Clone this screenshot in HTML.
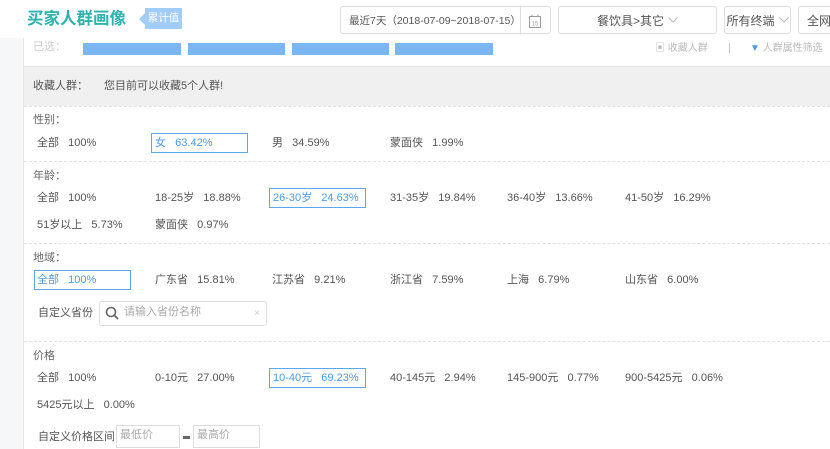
<!DOCTYPE html><html><head><meta charset="utf-8"><style>
*{margin:0;padding:0;box-sizing:border-box}
body{width:830px;height:449px;overflow:hidden;background:#fff;font-family:"Liberation Sans","Noto Sans CJK SC",sans-serif;font-size:11px;color:#555;position:relative}
.a{position:absolute;white-space:nowrap;line-height:13px}
.box{position:absolute;border:1px solid #ddd;border-radius:3px;background:#fff;font-size:12px;color:#555;display:flex;align-items:center;justify-content:center}
.sel{position:absolute;border:1px solid #5aa8ef;}
.blue{color:#4a9be8}
.dash{position:absolute;left:24px;right:0;border-top:1px dashed #e2e2e2}
.lab{color:#666}
.chev{margin-left:4px}
</style></head><body>
<div class="a" style="left:0;top:38px;width:23px;height:411px;background:#f6f7f9"></div>
<div class="a" style="left:23px;top:38px;width:1px;height:411px;background:#e6e6e6"></div>
<div class="a" style="left:27px;top:9px;font-size:16.5px;line-height:20px;font-weight:bold;color:#2cb3ae">买家人群画像</div>
<div class="a" style="left:133px;top:13px;width:0;height:0;border:6px solid transparent;border-right-color:#a3cdf9"></div>
<div class="a" style="left:145px;top:8px;width:37px;height:21px;background:#a3cdf9;color:#fff;font-size:10.5px;line-height:21px;text-align:center">累计值</div>
<div class="box" style="left:340px;top:6px;width:211px;height:28px;justify-content:flex-start;padding-left:8px;font-size:10.5px">最近7天（2018-07-09~2018-07-15）</div>
<div class="a" style="left:520px;top:7px;width:1px;height:26px;background:#ddd"></div>
<svg class="a" style="left:529px;top:14px" width="12" height="14" viewBox="0 0 12 14"><rect x="0.5" y="2.5" width="11" height="11" fill="none" stroke="#999"/><line x1="3" y1="0.5" x2="3" y2="3" stroke="#999"/><line x1="9" y1="0.5" x2="9" y2="3" stroke="#999"/><text x="6" y="11.5" font-size="6" text-anchor="middle" fill="#999">15</text></svg>
<div class="box" style="left:558px;top:6px;width:159px;height:28px">餐饮具&gt;其它<svg class="chev" width="10" height="6"><path d="M0.5 0.5L5 5L9.5 0.5" fill="none" stroke="#bbb"/></svg></div>
<div class="box" style="left:724px;top:6px;width:67px;height:28px">所有终端<svg class="chev" width="10" height="6"><path d="M0.5 0.5L5 5L9.5 0.5" fill="none" stroke="#bbb"/></svg></div>
<div class="box" style="left:798px;top:6px;width:40px;height:28px;justify-content:flex-start;padding-left:8px">全网</div>
<div class="a" style="left:33px;top:41px;color:#ccc">已选：</div>
<div class="a" style="left:83px;top:43px;width:98px;height:12px;background:#7cb6f2"></div>
<div class="a" style="left:188px;top:43px;width:97px;height:12px;background:#7cb6f2"></div>
<div class="a" style="left:292px;top:43px;width:97px;height:12px;background:#7cb6f2"></div>
<div class="a" style="left:395px;top:43px;width:98px;height:12px;background:#7cb6f2"></div>
<div class="a" style="left:655px;top:42px;color:#bbb;font-size:10px">▣ 收藏人群</div>
<div class="a" style="left:728px;top:42px;color:#bbb">|</div>
<div class="a" style="left:750px;top:42px;color:#bbb;font-size:10px"><span style="color:#4a9be8">▼</span> 人群属性筛选</div>
<div class="a" style="left:24px;top:66px;width:806px;height:40px;background:#f0f0f0;border-top:1px solid #e4e4e4"></div>
<div class="a" style="left:33px;top:80px">收藏人群：</div>
<div class="a" style="left:104px;top:80px">您目前可以收藏5个人群!</div>
<div class="dash" style="top:106px"></div>
<div class="a lab" style="left:33px;top:114px">性别：</div>
<div class="a" style="left:37px;top:137px">全部&nbsp;&nbsp;&nbsp;100%</div>
<div class="sel" style="left:151px;top:133px;width:97px;height:20px"></div>
<div class="a blue" style="left:155px;top:137px">女&nbsp;&nbsp;&nbsp;63.42%</div>
<div class="a" style="left:272px;top:137px">男&nbsp;&nbsp;&nbsp;34.59%</div>
<div class="a" style="left:390px;top:137px">蒙面侠&nbsp;&nbsp;&nbsp;1.99%</div>
<div class="dash" style="top:161px"></div>
<div class="a lab" style="left:33px;top:170px">年龄：</div>
<div class="a" style="left:37px;top:192px">全部&nbsp;&nbsp;&nbsp;100%</div>
<div class="a" style="left:155px;top:192px">18-25岁&nbsp;&nbsp;&nbsp;18.88%</div>
<div class="sel" style="left:269px;top:188px;width:97px;height:20px"></div>
<div class="a blue" style="left:273px;top:192px">26-30岁&nbsp;&nbsp;&nbsp;24.63%</div>
<div class="a" style="left:390px;top:192px">31-35岁&nbsp;&nbsp;&nbsp;19.84%</div>
<div class="a" style="left:507px;top:192px">36-40岁&nbsp;&nbsp;&nbsp;13.66%</div>
<div class="a" style="left:625px;top:192px">41-50岁&nbsp;&nbsp;&nbsp;16.29%</div>
<div class="a" style="left:37px;top:219px">51岁以上&nbsp;&nbsp;&nbsp;5.73%</div>
<div class="a" style="left:155px;top:219px">蒙面侠&nbsp;&nbsp;&nbsp;0.97%</div>
<div class="dash" style="top:243px"></div>
<div class="a lab" style="left:33px;top:252px">地域：</div>
<div class="sel" style="left:34px;top:270px;width:97px;height:20px"></div>
<div class="a blue" style="left:37px;top:274px">全部&nbsp;&nbsp;&nbsp;100%</div>
<div class="a" style="left:155px;top:274px">广东省&nbsp;&nbsp;&nbsp;15.81%</div>
<div class="a" style="left:272px;top:274px">江苏省&nbsp;&nbsp;&nbsp;9.21%</div>
<div class="a" style="left:390px;top:274px">浙江省&nbsp;&nbsp;&nbsp;7.59%</div>
<div class="a" style="left:507px;top:274px">上海&nbsp;&nbsp;&nbsp;6.79%</div>
<div class="a" style="left:625px;top:274px">山东省&nbsp;&nbsp;&nbsp;6.00%</div>
<div class="a" style="left:38px;top:307px">自定义省份</div>
<div class="a" style="left:99px;top:301px;width:168px;height:25px;border:1px solid #ddd;border-radius:3px"></div>
<svg class="a" style="left:105px;top:306px" width="14" height="14" viewBox="0 0 14 14"><circle cx="6" cy="6" r="4.5" fill="none" stroke="#666" stroke-width="1.6"/><line x1="9.3" y1="9.3" x2="13" y2="13" stroke="#666" stroke-width="1.8"/></svg>
<div class="a" style="left:124px;top:306px;color:#aaa">请输入省份名称</div>
<div class="a" style="left:254px;top:307px;color:#ccc;font-size:10px">×</div>
<div class="dash" style="top:341px"></div>
<div class="a lab" style="left:33px;top:350px">价格</div>
<div class="a" style="left:37px;top:372px">全部&nbsp;&nbsp;&nbsp;100%</div>
<div class="a" style="left:155px;top:372px">0-10元&nbsp;&nbsp;&nbsp;27.00%</div>
<div class="sel" style="left:269px;top:368px;width:97px;height:20px"></div>
<div class="a blue" style="left:273px;top:372px">10-40元&nbsp;&nbsp;&nbsp;69.23%</div>
<div class="a" style="left:390px;top:372px">40-145元&nbsp;&nbsp;&nbsp;2.94%</div>
<div class="a" style="left:507px;top:372px">145-900元&nbsp;&nbsp;&nbsp;0.77%</div>
<div class="a" style="left:625px;top:372px">900-5425元&nbsp;&nbsp;&nbsp;0.06%</div>
<div class="a" style="left:37px;top:399px">5425元以上&nbsp;&nbsp;&nbsp;0.00%</div>
<div class="a" style="left:38px;top:431px">自定义价格区间</div>
<div class="a" style="left:116px;top:425px;width:64px;height:23px;border:1px solid #ddd"></div>
<div class="a" style="left:120px;top:429px;color:#aaa">最低价</div>
<div class="a" style="left:183px;top:436px;width:7px;height:3px;background:#666"></div>
<div class="a" style="left:193px;top:425px;width:67px;height:23px;border:1px solid #ddd"></div>
<div class="a" style="left:197px;top:429px;color:#aaa">最高价</div>
</body></html>
